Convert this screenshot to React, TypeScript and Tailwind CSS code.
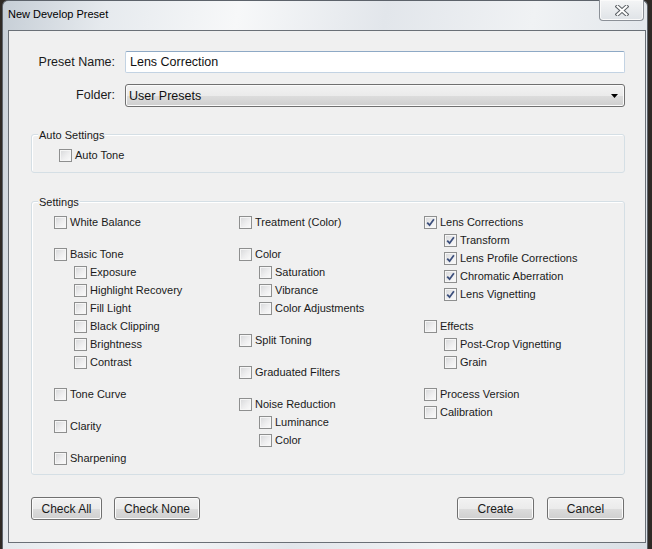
import React from "react";

type Item = { label?: string; indent?: boolean; checked?: boolean; gap?: boolean };

const col1: Item[] = [
  { label: "White Balance" },
  { gap: true },
  { label: "Basic Tone" },
  { label: "Exposure", indent: true },
  { label: "Highlight Recovery", indent: true },
  { label: "Fill Light", indent: true },
  { label: "Black Clipping", indent: true },
  { label: "Brightness", indent: true },
  { label: "Contrast", indent: true },
  { gap: true },
  { label: "Tone Curve" },
  { gap: true },
  { label: "Clarity" },
  { gap: true },
  { label: "Sharpening" },
];

const col2: Item[] = [
  { label: "Treatment (Color)" },
  { gap: true },
  { label: "Color" },
  { label: "Saturation", indent: true },
  { label: "Vibrance", indent: true },
  { label: "Color Adjustments", indent: true },
  { gap: true },
  { label: "Split Toning" },
  { gap: true },
  { label: "Graduated Filters" },
  { gap: true },
  { label: "Noise Reduction" },
  { label: "Luminance", indent: true },
  { label: "Color", indent: true },
];

const col3: Item[] = [
  { label: "Lens Corrections", checked: true },
  { label: "Transform", indent: true, checked: true },
  { label: "Lens Profile Corrections", indent: true, checked: true },
  { label: "Chromatic Aberration", indent: true, checked: true },
  { label: "Lens Vignetting", indent: true, checked: true },
  { gap: true },
  { label: "Effects" },
  { label: "Post-Crop Vignetting", indent: true },
  { label: "Grain", indent: true },
  { gap: true },
  { label: "Process Version" },
  { label: "Calibration" },
];

function Checkbox({ label, checked }: { label: string; checked?: boolean }) {
  return (
    <div className="flex items-center h-[18px] gap-[3px]">
      <span className="w-[13px] h-[13px] shrink-0 border border-[#8e8f8f] bg-[linear-gradient(135deg,#d6d7d9_0%,#eeeeef_55%,#fbfbfb_100%)] shadow-[inset_0_0_0_1px_#f6f6f6] flex items-center justify-center">
        {checked && (
          <svg width="9" height="9" viewBox="0 0 9 9">
            <path d="M1.2 4.6 L3.6 7.2 L7.9 1.3" stroke="#3c4f7c" strokeWidth="1.8" fill="none" />
          </svg>
        )}
      </span>
      <span className="text-[11px] leading-none text-[#1a1a1a]">{label}</span>
    </div>
  );
}

function Column({ items }: { items: Item[] }) {
  return (
    <div className="flex flex-col">
      {items.map((it, i) =>
        it.gap ? (
          <div key={i} className="h-[14px]" />
        ) : (
          <div key={i} className={it.indent ? "pl-[20px]" : ""}>
            <Checkbox label={it.label!} checked={it.checked} />
          </div>
        )
      )}
    </div>
  );
}

function Button({ children, w }: { children: React.ReactNode; w: string }) {
  return (
    <button
      className={`${w} h-[23px] rounded-[3px] border border-[#707070] bg-[linear-gradient(to_bottom,#f2f2f2_0%,#ebebeb_50%,#dddddd_50%,#cfcfcf_100%)] shadow-[inset_0_0_0_1px_#fbfbfb] text-[12px] text-[#1a1a1a] flex items-center justify-center`}
    >
      {children}
    </button>
  );
}

function GroupBox({ title, children, className }: { title: string; children: React.ReactNode; className: string }) {
  return (
    <div className={`relative ml-[22px] w-[594px] rounded-[3px] border border-[#d5dfe5] shadow-[inset_1px_1px_0_#ffffff] ${className}`}>
      <span className="absolute -top-[7px] left-[6px] px-[1px] bg-[#f0f0f0] text-[11px] leading-[14px] text-[#1a1a1a]">
        {title}
      </span>
      {children}
    </div>
  );
}

export default function App() {
  return (
    <div className="w-[652px] h-[549px] bg-[#2f2a26] font-['Liberation_Sans',Arial,sans-serif] overflow-hidden">
      <div className="ml-[2px] w-[646px] h-[549px] rounded-t-[6px] border border-b-0 border-[#5d636b] bg-[linear-gradient(100deg,#c6ced6_0%,#e6eaee_14%,#f7f8f9_32%,#e2e6eb_52%,#f0f2f4_72%,#d9dfe5_100%)] flex flex-col">
        {/* title bar */}
        <div className="h-[29px] flex items-start justify-between pl-[5px] pr-[3px]">
          <span className="mt-[8px] text-[11px] leading-none text-[#000]">New Develop Preset</span>
          <div className="-mt-[1px] w-[45px] h-[21px] rounded-b-[4px] border border-t-0 border-[#8b9097] bg-[linear-gradient(to_bottom,#f4f5f6,#dfe3e7)] shadow-[inset_0_0_0_1px_#fafafa] flex items-center justify-center">
            <svg width="14" height="11" viewBox="0 0 14 11">
              <path d="M2.5 1.5 L11.5 9.5 M11.5 1.5 L2.5 9.5" stroke="#5c6166" strokeWidth="4" strokeLinecap="square" />
              <path d="M2.5 1.5 L11.5 9.5 M11.5 1.5 L2.5 9.5" stroke="#ffffff" strokeWidth="2" strokeLinecap="square" />
            </svg>
          </div>
        </div>

        {/* client area */}
        <div className="ml-[5px] w-[638px] h-[513px] border border-[#6a7077] bg-[#f0f0f0] flex flex-col pt-[20px]">
          <div className="flex items-center h-[22px]">
            <span className="w-[106px] text-right text-[12.5px] text-[#1a1a1a]">Preset Name:</span>
            <div className="ml-[10px] w-[500px] h-[22px] rounded-[2px] border border-[#c3d3e3] border-t-[#8ea9c5] bg-white flex items-center pl-[4px] text-[12.5px] text-[#111]">
              Lens Correction
            </div>
          </div>

          <div className="flex items-center h-[23px] mt-[11px]">
            <span className="w-[106px] text-right text-[12.5px] text-[#1a1a1a]">Folder:</span>
            <div className="ml-[10px] w-[500px] h-[23px] rounded-[3px] border border-[#707070] bg-[linear-gradient(to_bottom,#f2f2f2_0%,#ebebeb_50%,#dddddd_50%,#cfcfcf_100%)] shadow-[inset_0_0_0_1px_#fbfbfb] flex items-center justify-between pl-[3px] pr-[6px] pt-[1px] text-[12.5px] text-[#111]">
              <span>User Presets</span>
              <svg width="7" height="4" viewBox="0 0 7 4">
                <path d="M0 0 L7 0 L3.5 4 Z" fill="#000" />
              </svg>
            </div>
          </div>

          <GroupBox title="Auto Settings" className="mt-[27px] h-[39px] pt-[11px] pl-[27px]">
            <Checkbox label="Auto Tone" />
          </GroupBox>

          <GroupBox title="Settings" className="mt-[28px] h-[274px] pt-[11px] pl-[22px]">
            <div className="grid grid-cols-[185px_185px_185px]">
              <Column items={col1} />
              <Column items={col2} />
              <Column items={col3} />
            </div>
          </GroupBox>

          <div className="mt-[22px] flex items-center pl-[22px] pr-[21px]">
            <Button w="w-[71px]">Check All</Button>
            <div className="ml-[12px]">
              <Button w="w-[86px]">Check None</Button>
            </div>
            <div className="ml-auto flex gap-[13px]">
              <Button w="w-[77px]">Create</Button>
              <Button w="w-[77px]">Cancel</Button>
            </div>
          </div>
        </div>
      </div>
    </div>
  );
}
